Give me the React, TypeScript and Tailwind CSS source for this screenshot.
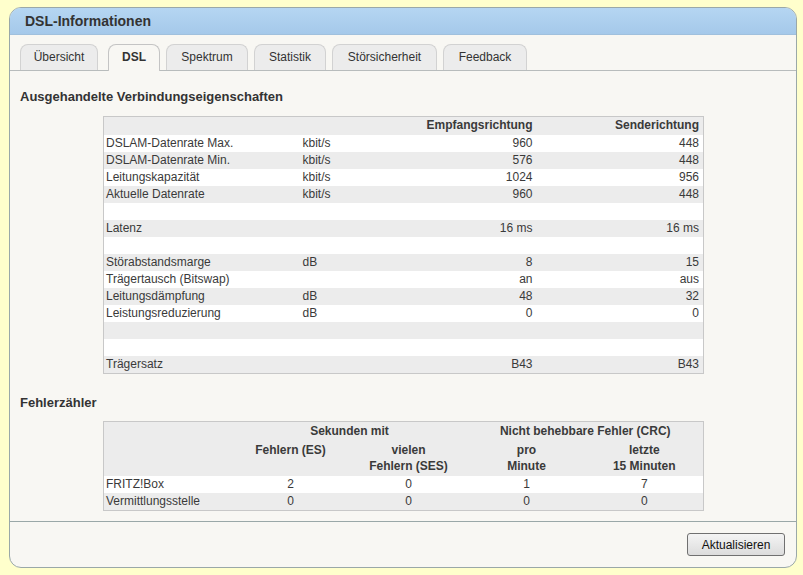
import React from "react";

const rows: [string, string, string, string][] = [
  ["DSLAM-Datenrate Max.", "kbit/s", "960", "448"],
  ["DSLAM-Datenrate Min.", "kbit/s", "576", "448"],
  ["Leitungskapazität", "kbit/s", "1024", "956"],
  ["Aktuelle Datenrate", "kbit/s", "960", "448"],
  ["", "", "", ""],
  ["Latenz", "", "16 ms", "16 ms"],
  ["", "", "", ""],
  ["Störabstandsmarge", "dB", "8", "15"],
  ["Trägertausch (Bitswap)", "", "an", "aus"],
  ["Leitungsdämpfung", "dB", "48", "32"],
  ["Leistungsreduzierung", "dB", "0", "0"],
  ["", "", "", ""],
  ["", "", "", ""],
  ["Trägersatz", "", "B43", "B43"],
];

const tabs = [
  { label: "Übersicht", w: "w-[78px]", ml: "ml-[10px]" },
  { label: "DSL", w: "w-[52px]", ml: "ml-[10px]", active: true },
  { label: "Spektrum", w: "w-[82px]", ml: "ml-[6px]" },
  { label: "Statistik", w: "w-[72px]", ml: "ml-[6px]" },
  { label: "Störsicherheit", w: "w-[105px]", ml: "ml-[6px]" },
  { label: "Feedback", w: "w-[84px]", ml: "ml-[6px]" },
];

export default function App() {
  return (
    <div className="w-[803px] h-[575px] bg-[#ffffcc] pt-[7px] pl-[9px] font-['Liberation_Sans',Arial,sans-serif] text-[12px] text-[#3a3a3a]">
      <div className="w-[788px] h-[561px] rounded-[12px] border border-[#9aa8a8] bg-[#f8f7f3] overflow-hidden flex flex-col">
        <div className="h-[27px] bg-gradient-to-b from-[#b5d6f2] to-[#a5c9ea] border-b border-[#a0c0dd] flex items-center pl-[15px] text-[14px] font-bold text-[#333]">
          DSL-Informationen
        </div>

        <div className="flex items-end h-[36px] border-b border-[#b8bcbc]">
          {tabs.map((t) => (
            <div
              key={t.label}
              className={
                t.active
                  ? `${t.w} ${t.ml} h-[27px] -mb-px pb-[2px] rounded-t-[8px] border border-b-0 border-[#c4c4c4] bg-[#f8f7f3] flex items-center justify-center font-bold text-[#333]`
                  : `${t.w} ${t.ml} h-[26px] pb-[2px] rounded-t-[8px] border border-b-0 border-[#d2d2d2] bg-[#ececec] flex items-center justify-center text-[#333]`
              }
            >
              {t.label}
            </div>
          ))}
        </div>

        <div className="flex-1 pl-[10px]">
          <div className="mt-[18px] text-[13px] font-bold text-[#333] leading-[16px]">
            Ausgehandelte Verbindungseigenschaften
          </div>
          <table className="mt-[11px] ml-[83px] w-[601px] border border-[#c8c8c8] border-collapse leading-[17px]">
            <thead>
              <tr className="bg-[#ececec] font-bold h-[18px]">
                <th className="w-[199px]"></th>
                <th className="w-[60px]"></th>
                <th className="text-right pr-[5px]">Empfangsrichtung</th>
                <th className="text-right pr-[4px] w-[166px]">Senderichtung</th>
              </tr>
            </thead>
            <tbody>
              {rows.map((r, i) => (
                <tr key={i} className={i % 2 === 0 ? "bg-white h-[17px]" : "bg-[#ececec] h-[17px]"}>
                  <td className="pl-[2px] text-left">{r[0]}</td>
                  <td className="text-left">{r[1]}</td>
                  <td className="text-right pr-[5px]">{r[2]}</td>
                  <td className="text-right pr-[4px]">{r[3]}</td>
                </tr>
              ))}
            </tbody>
          </table>

          <div className="mt-[21px] text-[13px] font-bold text-[#333] leading-[16px]">Fehlerzähler</div>
          <table className="mt-[10px] ml-[83px] w-[601px] border border-[#c8c8c8] border-collapse leading-[17px]">
            <thead className="bg-[#ececec] font-bold">
              <tr className="h-[18px]">
                <th className="w-[128px]"></th>
                <th colSpan={2} className="text-center pt-[1px]">Sekunden mit</th>
                <th colSpan={2} className="text-center pt-[1px]">Nicht behebbare Fehler (CRC)</th>
              </tr>
              <tr className="align-top leading-[16px]">
                <th></th>
                <th className="w-[118px] text-center pt-[2px]">Fehlern (ES)</th>
                <th className="w-[118px] text-center pt-[2px] pb-[2px]">vielen<br />Fehlern (SES)</th>
                <th className="w-[118px] text-center pt-[2px]">pro<br />Minute</th>
                <th className="text-center pt-[2px]">letzte<br />15 Minuten</th>
              </tr>
            </thead>
            <tbody>
              <tr className="bg-white h-[17px]">
                <td className="pl-[2px]">FRITZ!Box</td>
                <td className="text-center">2</td>
                <td className="text-center">0</td>
                <td className="text-center">1</td>
                <td className="text-center">7</td>
              </tr>
              <tr className="bg-[#ececec] h-[17px]">
                <td className="pl-[2px]">Vermittlungsstelle</td>
                <td className="text-center">0</td>
                <td className="text-center">0</td>
                <td className="text-center">0</td>
                <td className="text-center">0</td>
              </tr>
            </tbody>
          </table>
        </div>

        <div className="h-[46px] border-t border-[#9aa8a8] flex items-start justify-end pr-[11px] pt-[11px]">
          <button className="w-[98px] h-[23px] rounded-[3px] border border-[#707070] bg-gradient-to-b from-[#f4f4f4] to-[#dcdcdc] text-[12px] text-[#111]">
            Aktualisieren
          </button>
        </div>
      </div>
    </div>
  );
}
